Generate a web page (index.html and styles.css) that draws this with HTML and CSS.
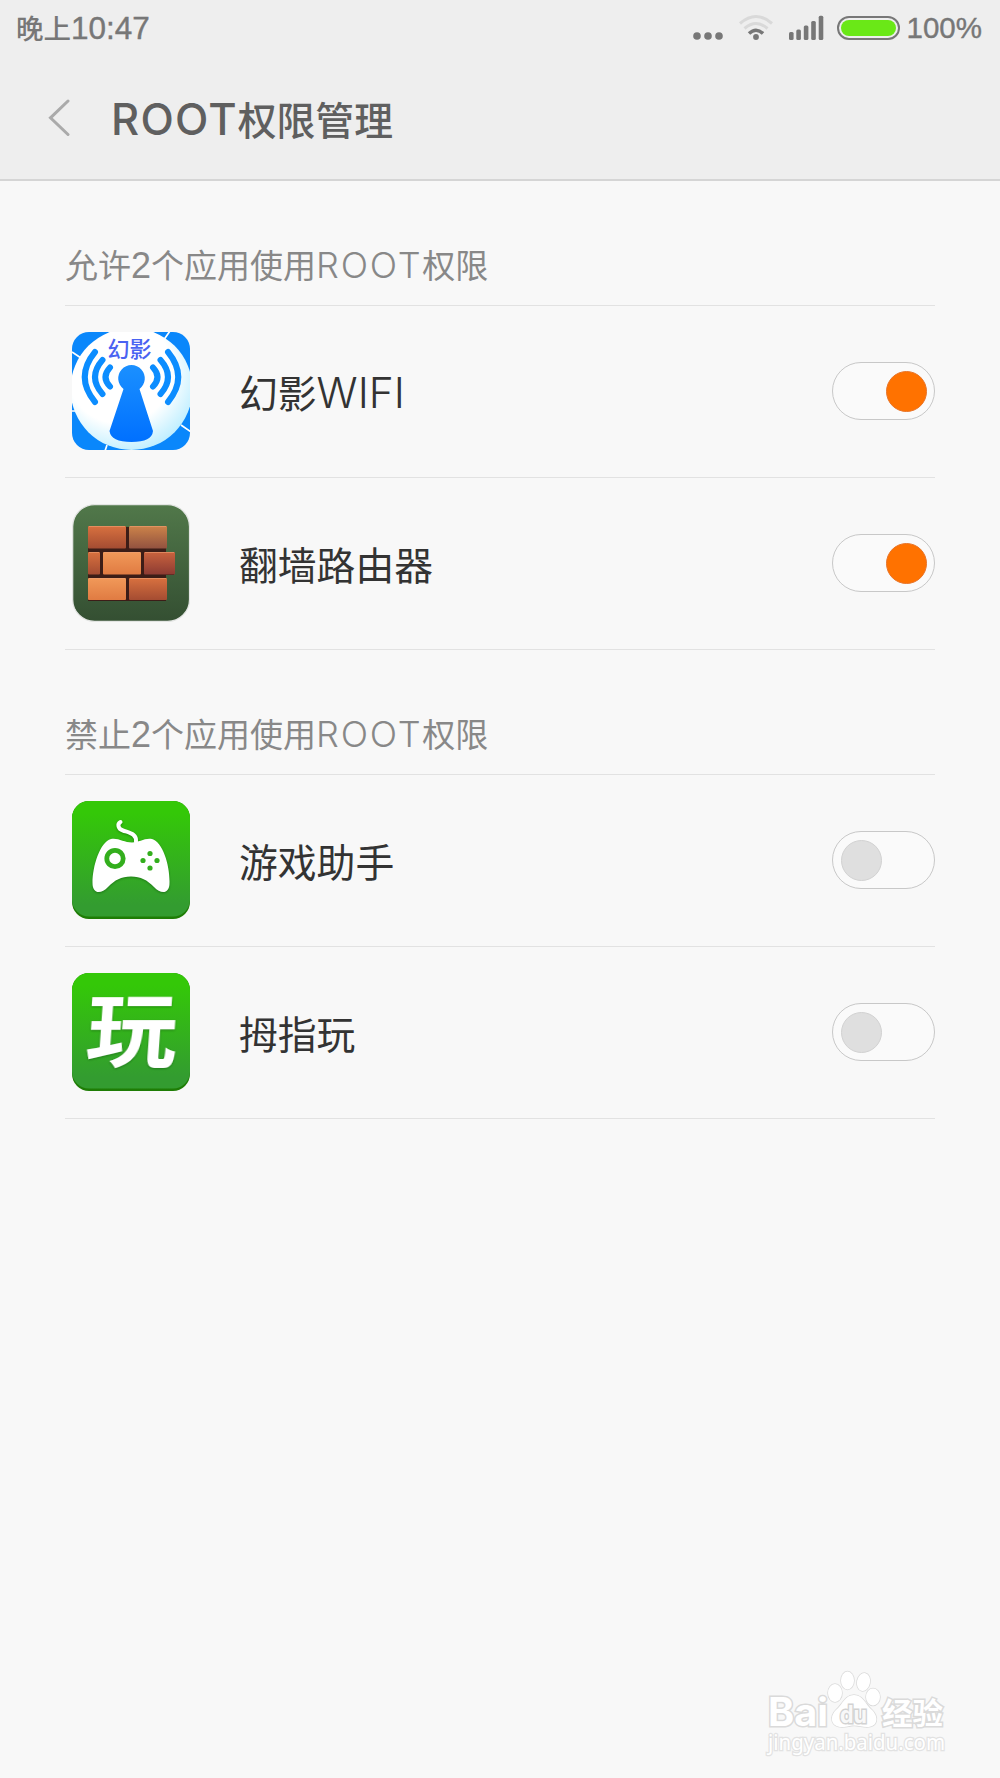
FILE: index.html
```
<!DOCTYPE html>
<html lang="zh-CN">
<head>
    <meta charset="UTF-8">
    <meta name="viewport" content="width=device-width, initial-scale=1.0">
    <title>ROOT权限管理</title>
    <link rel="stylesheet" href="styles.css">
</head>
<body>
    <header class="top">
        <div class="status-bar">
            <div class="time">晚上<span class="clock">10:47</span></div>
            <div class="status-icons">
                <svg class="dots" width="30" height="40" viewBox="0 0 30 40" fill="#777">
                    <circle cx="4" cy="28" r="3.8"/><circle cx="15" cy="28" r="3.8"/><circle cx="26" cy="28" r="3.8"/>
                </svg>
                <svg class="wifi" width="34" height="40" viewBox="0 0 34 40" fill="none" stroke-width="3">
                    <path d="M1 15.500Q17 1.500 33 15.500" stroke="#d9d9d9"/>
                    <path d="M5.500 20.500Q17 10.500 28.500 20.500" stroke="#d9d9d9"/>
                    <path d="M10 25.500Q17 19 24 25.500" stroke="#777" stroke-width="3.500"/>
                    <circle cx="17" cy="29" r="2.900" fill="#777"/>
                </svg>
                <svg class="signal" width="35" height="40" viewBox="0 0 35 40" fill="#777">
                    <rect x="0" y="24" width="4.600" height="8" rx="1.500"/>
                    <rect x="7.300" y="21.500" width="4.600" height="10.500" rx="1.500"/>
                    <rect x="14.800" y="17.500" width="4.600" height="14.500" rx="1.500"/>
                    <rect x="22.200" y="13" width="4.600" height="19" rx="1.500"/>
                    <rect x="29.700" y="7.800" width="4.600" height="24.200" rx="1.500"/>
                </svg>
                <div class="battery"><div class="level"></div></div>
                <span class="percent">100%</span>
            </div>
        </div>
        <div class="title-bar">
            <svg width="24" height="38" viewBox="0 0 24 38" fill="none" stroke="#aaa" stroke-width="3" stroke-linecap="round">
                <path d="M20 2L2.500 18.800L20 35.500"/>
            </svg>
            <h1><span class="latin">ROOT</span>权限管理</h1>
        </div>
    </header>

    <main>
        <section>
            <h2>允许<span class="num">2</span>个应用使用<span class="latin">ROOT</span>权限</h2>
            <ul>
                <li>
                    <svg class="icon" viewBox="0 0 118 118">
                        <defs>
                            <clipPath id="wifiClip"><rect width="118" height="118" rx="17"/></clipPath>
                            <linearGradient id="tower" x1="0" y1="0" x2="0" y2="1">
                                <stop offset="0" stop-color="#1b90ff"/><stop offset="1" stop-color="#0070ff"/>
                            </linearGradient>
                            <radialGradient id="disc" cx=".4" cy=".35" r=".72">
                                <stop offset=".6" stop-color="#fff"/><stop offset="1" stop-color="#b5ecff"/>
                            </radialGradient>
                        </defs>
                        <g clip-path="url(#wifiClip)">
                            <rect width="118" height="118" fill="#0a87fb"/>
                            <path d="M0 20l9 6M91 9l7-10M109 93l10 7M35 113l-2 6M0 79l4 0" stroke="#fff" stroke-width="1.700"/>
                            <circle cx="59.500" cy="57" r="61" fill="url(#disc)"/>
                            <g fill="none" stroke="#0c8dff" stroke-width="6" stroke-linecap="round">
                                <path d="M38 35.500Q29 45 38 54.500"/>
                                <path d="M30.500 28Q15.500 45 30.500 62"/>
                                <path d="M23 20Q2.500 45 23 70"/>
                                <path d="M81 35.500Q90 45 81 54.500"/>
                                <path d="M88.500 28Q103.500 45 88.500 62"/>
                                <path d="M96 20Q116.500 45 96 70"/>
                            </g>
                            <path d="M51.500 57L37.500 99Q39 110 59.500 110Q80 110 81 99L67.500 57A13.300 13.300 0 1 0 51.500 57z" fill="url(#tower)"/>
                            <text x="57.500" y="25" class="wifi-word">幻影</text>
                        </g>
                    </svg>
                    <span class="name">幻影<span class="latin">WIFI</span></span>
                    <div class="switch on"><i></i></div>
                </li>
                <li>
                    <svg class="icon" viewBox="0 0 118 118">
                        <defs>
                            <linearGradient id="moss" x1="0" y1="0" x2="0" y2="1">
                                <stop offset="0" stop-color="#51784a"/><stop offset="1" stop-color="#344f32"/>
                            </linearGradient>
                            <linearGradient id="brickA" x1="0" y1="0" x2="0" y2="1">
                                <stop offset="0" stop-color="#d8713f"/><stop offset="1" stop-color="#a44c32"/>
                            </linearGradient>
                            <linearGradient id="brickB" x1="0" y1="0" x2="0" y2="1">
                                <stop offset="0" stop-color="#cc8349"/><stop offset="1" stop-color="#925240"/>
                            </linearGradient>
                            <linearGradient id="brickC" x1="0" y1="0" x2="0" y2="1">
                                <stop offset="0" stop-color="#f19959"/><stop offset="1" stop-color="#e07b42"/>
                            </linearGradient>
                            <linearGradient id="brickD" x1="0" y1="0" x2="0" y2="1">
                                <stop offset="0" stop-color="#c9633e"/><stop offset="1" stop-color="#8d3b33"/>
                            </linearGradient>
                        </defs>
                        <rect x=".7" y=".6" width="116.800" height="116.800" rx="22" fill="url(#moss)" stroke="#e3e5e3" stroke-width="1.200"/>
                        <path d="M16 23H94V50H102V71H94V97H16z" fill="#3c1d17"/>
                        <rect x="16" y="22" width="38" height="22.500" rx="1" fill="url(#brickA)"/>
                        <rect x="57" y="22" width="38" height="22.500" rx="1" fill="url(#brickB)"/>
                        <rect x="16" y="48" width="12" height="22.500" rx="1" fill="url(#brickA)"/>
                        <rect x="31" y="48" width="38" height="22.500" rx="1" fill="url(#brickC)"/>
                        <rect x="72" y="48" width="31" height="22.500" rx="1" fill="url(#brickD)"/>
                        <rect x="16" y="74" width="38" height="22" rx="1" fill="url(#brickC)"/>
                        <rect x="57" y="74" width="38" height="22" rx="1" fill="url(#brickA)"/>
                        <path d="M17 22.500H53M58 22.500H94M17 48.500H27M32 48.500H68M73 48.500H102M17 74.500H53M58 74.500H94" stroke="#f0a074" stroke-opacity=".6"/>
                    </svg>
                    <span class="name">翻墙路由器</span>
                    <div class="switch on"><i></i></div>
                </li>
            </ul>
        </section>

        <section>
            <h2>禁止<span class="num">2</span>个应用使用<span class="latin">ROOT</span>权限</h2>
            <ul>
                <li>
                    <svg class="icon" viewBox="0 0 118 118">
                        <defs>
                            <linearGradient id="green" x1="0" y1="0" x2="0" y2="1">
                                <stop offset=".1" stop-color="#34c808"/><stop offset=".9" stop-color="#339c30"/>
                            </linearGradient>
                        </defs>
                        <rect width="118" height="118" rx="17" fill="#1e7d05"/>
                        <rect width="118" height="115.500" rx="17" fill="url(#green)"/>
                        <g class="raised">
                            <path d="M48.500 21C45 23 46 28 51 29.500C58 32 65 33 64 41" fill="none" stroke="#fff" stroke-width="4" stroke-linecap="round"/>
                            <path d="M39 38C46 36.500 52 41.500 60 41.500C67 41.500 73 36.500 80 38C91 41 98 65 97.500 82C97.500 93 89 93.500 82 86C75 79 69 75.500 59 75.500C49 75.500 43 79 36 86C29 93.500 20.500 93 20.500 82C20.500 65 28 41 39 38z" fill="#fff"/>
                        </g>
                        <circle cx="43" cy="57.500" r="8.200" fill="none" stroke="#33ae1d" stroke-width="4.800"/>
                        <g fill="#33ae1d">
                            <circle cx="78" cy="52.500" r="2.600"/><circle cx="71" cy="59.500" r="2.600"/>
                            <circle cx="85" cy="59.500" r="2.600"/><circle cx="78" cy="67" r="2.600"/>
                        </g>
                    </svg>
                    <span class="name">游戏助手</span>
                    <div class="switch"><i></i></div>
                </li>
                <li>
                    <svg class="icon" viewBox="0 0 118 118">
                        <rect width="118" height="118" rx="17" fill="#1e7d05"/>
                        <rect width="118" height="115.500" rx="17" fill="url(#green)"/>
                        <text class="play-word raised" transform="translate(58 87) skewX(-4) scale(1.140 1)">玩</text>
                    </svg>
                    <span class="name">拇指玩</span>
                    <div class="switch"><i></i></div>
                </li>
            </ul>
        </section>
    </main>

    <svg class="watermark" width="190" height="96" viewBox="0 0 190 96">
        <g class="mark">
            <text x="3" y="56" class="bai" textLength="60" lengthAdjust="spacingAndGlyphs">Bai</text>
            <ellipse cx="70" cy="23" rx="7" ry="9"/>
            <ellipse cx="82.500" cy="10.500" rx="6.500" ry="9"/>
            <ellipse cx="98.500" cy="12" rx="6.500" ry="9" transform="rotate(12 98.500 12)"/>
            <ellipse cx="108" cy="27" rx="7" ry="8.500"/>
            <path d="M89 25C80 25 78 34 71 40C64 47 66 57 77 57C83 57 84 55.500 89 55.500C94 55.500 97 57 102 57C113 57 114 47 107 40C100 34 98 25 89 25z"/>
            <text x="75" y="53" class="du" textLength="27" lengthAdjust="spacingAndGlyphs">du</text>
            <text x="117" y="54" class="jingyan" textLength="61" lengthAdjust="spacingAndGlyphs">经验</text>
            <text x="3" y="80" class="url" textLength="177" lengthAdjust="spacingAndGlyphs">jingyan.baidu.com</text>
        </g>
    </svg>
</body>
</html>
```
FILE: styles.css
```
* {
    box-sizing: border-box;
}

body {
    margin: 0;
    position: relative;
    height: 1778px;
    background-color: #f8f8f8;
    font-family: "Noto Sans CJK SC", sans-serif;
    font-weight: 400;
    color: #333;
    overflow: hidden;
}

.latin {
    font-family: Inter, "Liberation Sans", sans-serif;
    font-weight: 300;
    line-height: 1;
}

.top {
    height: 181px;
    background-color: #eee;
    border-bottom: 2px solid #d5d5d5;
}

/* Status bar */
.status-bar {
    height: 56px;
    padding: 0 18px 0 16px;
    display: flex;
    justify-content: space-between;
    align-items: center;
    color: #777;
    font-weight: 500;
}

.time {
    font-size: 27.5px;
    line-height: 54px;
    padding-bottom: 2px;
}

.clock,
.percent {
    font-family: "Liberation Sans", Arial, sans-serif;
    font-weight: 400;
    line-height: 1;
    -webkit-text-stroke: 0.4px #777;
}

.clock {
    font-size: 31.5px;
}

.percent {
    font-size: 29.5px;
}

.status-icons {
    display: flex;
    align-items: center;
    height: 40px;
}

.dots,
.wifi {
    margin-right: 16px;
}

.signal {
    margin-right: 13px;
}

.dots,
.wifi,
.signal {
    margin-top: 15px;
    margin-bottom: 1px;
    align-self: flex-end;
    transform: translateY(1px);
}

.battery {
    width: 63px;
    height: 24px;
    border: 2px solid #777;
    border-radius: 12px;
    padding: 2px;
    margin-right: 7px;
}

.level {
    height: 100%;
    border-radius: 8px;
    background-color: #6ae817;
}

/* Title */
.title-bar {
    height: 124px;
    padding-left: 48px;
    display: flex;
    align-items: center;
}

h1 {
    margin: 0 0 0 39px;
    font-size: 38.8px;
    font-weight: 500;
    line-height: 60px;
    color: #5f5f5f;
}

h1 .latin {
    font-size: 43.5px;
    font-weight: 500;
    letter-spacing: 1.2px;
}

/* Lists */
main {
    padding: 0 65px;
}

h2 {
    margin: 0;
    height: 125px;
    padding-top: 59px;
    font-size: 33px;
    line-height: 48px;
    font-weight: 400;
    color: #888;
    border-bottom: 1px solid #e2e2e2;
}

h2 .latin {
    font-size: 36px;
    letter-spacing: 1.8px;
}

.num {
    font-family: "Liberation Sans", Arial, sans-serif;
    font-size: 36px;
    line-height: 1;
}

ul {
    margin: 0;
    padding: 0;
    list-style: none;
}

li {
    height: 172px;
    padding: 0 0 2px 7px;
    display: flex;
    align-items: center;
    border-bottom: 1px solid #e2e2e2;
}

.icon {
    width: 118px;
    height: 118px;
}

.name {
    flex: 1;
    margin-left: 49px;
    font-size: 38.8px;
    line-height: 60px;
}

.name .latin {
    font-size: 42.5px;
}

.switch {
    width: 103px;
    height: 58px;
    padding: 8px 7px 7px 8px;
    border: 1px solid #c8c8c8;
    border-radius: 29px;
    background-color: #fafafa;
    display: flex;
}

.switch i {
    width: 41px;
    height: 41px;
    border-radius: 50%;
    background-color: #dfdfdf;
    border: 1px solid #d2d2d2;
}

.switch.on {
    justify-content: flex-end;
}

.switch.on i {
    background-color: #ff7200;
    border-color: #e8752a;
}

/* Words inside the app icons */
.wifi-word {
    font-size: 22px;
    fill: #4a63f2;
    text-anchor: middle;
    font-weight: 500;
}

.play-word {
    font-size: 80px;
    font-weight: 700;
    fill: #fff;
    text-anchor: middle;
}

.raised {
    filter: drop-shadow(0 1px 1px rgba(0, 60, 0, 0.4));
}

/* Watermark */
.watermark {
    position: absolute;
    left: 765px;
    top: 1670px;
}

.mark {
    fill: #fff;
    stroke: #dadada;
    stroke-width: 1.5px;
    paint-order: stroke;
}

.bai,
.du {
    font-family: Inter, sans-serif;
    font-weight: 700;
}

.bai {
    font-size: 39px;
    stroke-width: 3px;
}

.du {
    font-size: 24px;
    fill: #f8f8f8;
    stroke: #d2d2d2;
    stroke-width: 3px;
}

.jingyan {
    font-size: 30px;
    font-weight: 700;
    stroke-width: 3px;
}

.url {
    font-family: "Noto Sans", sans-serif;
    font-size: 21px;
    font-weight: 400;
    stroke: #e2e2e2;
    stroke-width: 2.5px;
}
```
